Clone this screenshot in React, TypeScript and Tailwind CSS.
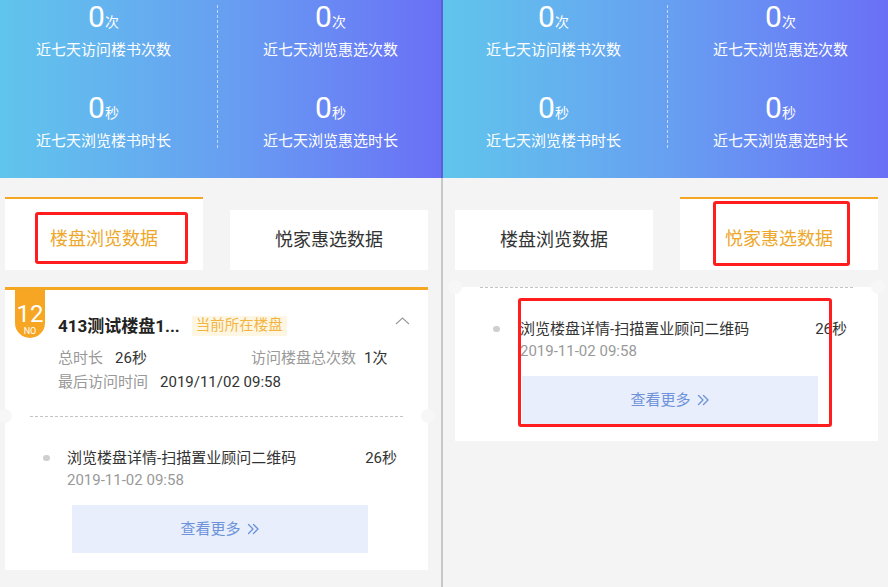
import React from "react";

function Stat({ unit, label }: { unit: string; label: string }) {
  return (
    <div className="flex flex-col items-center text-white">
      <div className="h-[30px] flex items-baseline whitespace-nowrap">
        <span className="text-[30px] leading-[30px]">0</span>
        <span className="text-[14px] leading-[14px]">{unit}</span>
      </div>
      <div className="mt-[7px] h-[22px] leading-[22px] text-[15px] whitespace-nowrap">{label}</div>
    </div>
  );
}

function Header({ right }: { right?: boolean }) {
  return (
    <div className="h-[178px] overflow-hidden bg-linear-to-r from-[#60c5ec] via-[#67a0f1] to-[#6a6ff6]">
      <div className={right ? "flex ml-[-3px]" : "flex ml-[-10px]"}>
        <div className="w-[227px] shrink-0 pt-[2px] flex flex-col items-center">
          <Stat unit="次" label="近七天访问楼书次数" />
          <div className="mt-[32px]">
            <Stat unit="秒" label="近七天浏览楼书时长" />
          </div>
        </div>
        <div className="mt-[5px] h-[143px] shrink-0 border-l border-dashed border-white/60" />
        <div className="w-[225px] shrink-0 pt-[2px] flex flex-col items-center">
          <Stat unit="次" label="近七天浏览惠选次数" />
          <div className="mt-[32px]">
            <Stat unit="秒" label="近七天浏览惠选时长" />
          </div>
        </div>
      </div>
    </div>
  );
}

function RedBox({ cls }: { cls: string }) {
  return <div className={`absolute border-[3px] border-[#ff1d1d] rounded-[3px] pointer-events-none ${cls}`} />;
}

function Tabs({ right }: { right?: boolean }) {
  const active =
    "relative w-[198px] shrink-0 bg-white border-t-2 border-[#f5a623] pt-[11px]";
  const inactive = "relative w-[198px] shrink-0 bg-white";
  return (
    <div className={right ? "mt-[19px] flex items-end gap-[27px] pl-[12px]" : "mt-[19px] flex items-end gap-[27px] pl-[5px]"}>
      <div className={right ? inactive : active}>
        <div className={right ? "h-[60px] pb-[2px] flex items-center justify-center text-[18px] text-[#333]" : "h-[60px] pb-[4px] flex items-center justify-center text-[18px] text-[#eda82c]"}>
          楼盘浏览数据
        </div>
        {!right && <RedBox cls="left-[30px] top-[13px] w-[153px] h-[52px]" />}
      </div>
      <div className={right ? active : inactive}>
        <div className={right ? "h-[60px] pb-[4px] flex items-center justify-center text-[18px] text-[#eda82c]" : "h-[60px] pb-[2px] flex items-center justify-center text-[18px] text-[#333]"}>
          悦家惠选数据
        </div>
        {right && <RedBox cls="left-[33px] top-[2px] w-[137px] h-[65px]" />}
      </div>
    </div>
  );
}

function DoubleChevron() {
  return (
    <svg width="13" height="12" viewBox="0 0 13 12" fill="none" className="ml-[6px]">
      <path d="M1.5 1.5 L6 6 L1.5 10.5" stroke="#6e93da" strokeWidth="1.4" strokeLinecap="round" strokeLinejoin="round" />
      <path d="M6.5 1.5 L11 6 L6.5 10.5" stroke="#6e93da" strokeWidth="1.4" strokeLinecap="round" strokeLinejoin="round" />
    </svg>
  );
}

function TicketSection({ right }: { right?: boolean }) {
  return (
    <div className="relative">
      <div className="mx-[25px] border-t border-dashed border-[#c4c4c4]" />
      <div className="absolute left-[-7px] top-[-7px] w-[14px] h-[14px] rounded-full bg-[#f7f7f7]" />
      <div className="absolute right-[-7px] top-[-7px] w-[14px] h-[14px] rounded-full bg-[#f7f7f7]" />
      <div className="pt-[30px] pb-[17px]">
        <div className="flex items-center h-[22px] leading-[22px] text-[15px] pl-[38px] pr-[31px]">
          <div className="w-[7px] h-[6px] rounded-full bg-[#cfcfcf] shrink-0" />
          <div className={right ? "ml-[20px] text-[#333]" : "ml-[17px] text-[#333]"}>浏览楼盘详情-扫描置业顾问二维码</div>
          <div className="ml-auto text-[#333]">26秒</div>
        </div>
        <div className={right ? "h-[22px] leading-[22px] text-[15px] pl-[65px] text-[#999]" : "h-[22px] leading-[22px] text-[15px] pl-[62px] text-[#999]"}>2019-11-02 09:58</div>
        <div className="mt-[14px] ml-[67px] w-[296px] h-[48px] bg-[#e8eefc] flex items-center justify-center text-[15px] text-[#6e93da]">
          查看更多
          <DoubleChevron />
        </div>
      </div>
    </div>
  );
}

function LeftCard() {
  return (
    <div className="relative mt-[17px] ml-[5px] w-[423px] bg-white">
      <div className="h-[3px] bg-[#f5a623]" />
      <div className="absolute left-[10px] top-[3px] w-[30px] h-[48px] rounded-b-[15px] bg-[#f6a623] flex flex-col items-center text-white">
        <div className="mt-[12px] h-[24px] text-[24px] leading-[24px]">12</div>
        <div className="mt-[1px] h-[9px] text-[9px] leading-[9px]">NO</div>
      </div>
      <div className="pl-[53px] pr-[18px] pt-[24px] pb-[23px]">
        <div className="flex items-start h-[24px]">
          <div className="h-[24px] leading-[24px] text-[17px] font-bold text-[#222]">413测试楼盘1...</div>
          <div className="ml-[12px] mt-[2px] h-[20px] leading-[20px] px-[4px] bg-[#fdf6e3] text-[#f3b542] text-[14.5px]">当前所在楼盘</div>
          <svg width="15" height="8" viewBox="0 0 15 8" fill="none" className="ml-auto mt-[3px]">
            <path d="M1 7 L7.5 1 L14 7" stroke="#9a9a9a" strokeWidth="1.1" />
          </svg>
        </div>
        <div className="mt-[9px] flex h-[22px] leading-[22px] text-[15px]">
          <div className="w-[193px] flex">
            <span className="text-[#999]">总时长</span>
            <span className="ml-[12px] text-[#333]">26秒</span>
          </div>
          <span className="text-[#999]">访问楼盘总次数</span>
          <span className="ml-[8px] text-[#333]">1次</span>
        </div>
        <div className="mt-[2px] flex h-[22px] leading-[22px] text-[15px]">
          <span className="text-[#999]">最后访问时间</span>
          <span className="ml-[12px] text-[#333]">2019/11/02 09:58</span>
        </div>
      </div>
      <TicketSection />
    </div>
  );
}

function RightCard() {
  return (
    <div className="relative mt-[17px] ml-[12px] w-[423px] bg-white">
      <TicketSection right />
      <RedBox cls="left-[63px] top-[11px] w-[314px] h-[129px]" />
    </div>
  );
}

export default function App() {
  return (
    <div className="w-[888px] h-[587px] flex overflow-hidden bg-[#f4f4f4] font-['Roboto','Noto_Sans_CJK_SC',sans-serif]">
      <div className="w-[441px] shrink-0 flex flex-col">
        <Header />
        <Tabs />
        <LeftCard />
      </div>
      <div className="w-[2px] shrink-0 flex flex-col">
        <div className="h-[178px] bg-[#5a5fd2]" />
        <div className="flex-1 bg-[#c8c8c8]" />
      </div>
      <div className="w-[445px] shrink-0 flex flex-col">
        <Header right />
        <Tabs right />
        <RightCard />
      </div>
    </div>
  );
}
